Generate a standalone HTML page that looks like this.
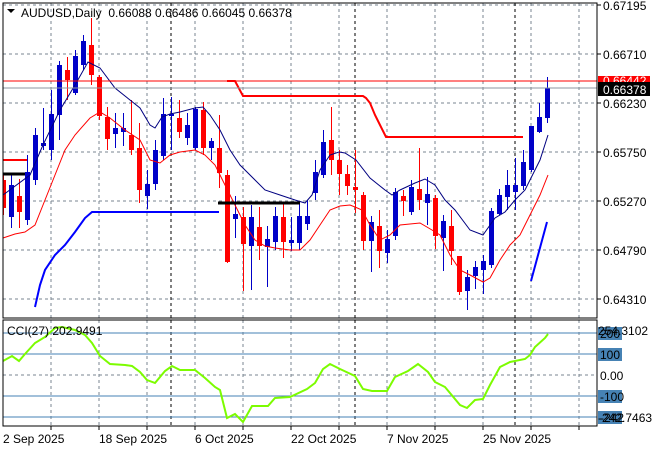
<!DOCTYPE html>
<html><head><meta charset="utf-8"><style>
html,body{margin:0;padding:0;background:#fff;width:660px;height:450px;overflow:hidden}
svg{display:block;font-family:"Liberation Sans",sans-serif;font-size:12px}
</style></head><body>
<svg id="s" width="660" height="450" xmlns="http://www.w3.org/2000/svg">
<rect width="660" height="450" fill="#fff"/>
<g id="grid" stroke="#7a8590" stroke-width="1" stroke-dasharray="3,3" fill="none"></g>
<g id="cand"></g>
<!-- moving averages -->
<polyline fill="none" stroke="#000080" stroke-width="1" points="3,195 30,175 43,145 60,110 75,85 88,62 100,68 115,88 125,96 140,108 150,125 155,128 162,117 170,114 180,112 195,108 203,107 210,115 220,130 230,150 240,165 255,180 265,190 280,195 295,200 305,203 312,195 320,170 330,155 339,152 345,153 356,160 370,178 385,190 392,195 400,190 415,183 425,179 435,185 445,200 455,210 470,230 483,235 495,218 505,212 515,200 525,190 540,160 548,135"/>
<polyline fill="none" stroke="#ff0000" stroke-width="1" points="3,238 15,234 25,232 35,225 45,200 55,175 65,150 75,135 90,118 100,112 110,118 125,130 140,140 150,160 160,163 170,155 180,152 195,150 205,155 215,165 225,185 235,205 245,225 255,240 265,246 275,248 290,250 300,250 310,240 320,225 330,210 340,206 350,205 355,207 362,210 370,225 380,240 390,235 400,225 410,224 420,223 432,230 440,235 450,255 460,270 470,275 483,282 490,278 500,260 510,245 520,235 530,215 540,195 548,175"/>
<polyline fill="none" stroke="#0000ff" stroke-width="2" points="35,307 40,285 45,270 55,255 65,245 75,232 85,218 92,212 219,212"/>
<polyline fill="none" stroke="#0000ff" stroke-width="2" points="531,281 547,222"/>
<polyline fill="none" stroke="#000" stroke-width="3" points="3,174 25,174"/>
<polyline fill="none" stroke="#000" stroke-width="3" points="218,203 300,203"/>
<polyline fill="none" stroke="#ff0000" stroke-width="2" points="3,160 27,160"/>
<polyline fill="none" stroke="#ff0000" stroke-width="2" points="227,81 235,81 243,96 363,96 366,98 370,103 375,115 380,125 386,137 523,137"/>
<line x1="3" y1="81" x2="597" y2="81" stroke="#ff0000" stroke-width="1"/>
<line x1="3" y1="88" x2="597" y2="88" stroke="#8c96a0" stroke-width="1"/>
<!-- indicator levels -->
<g stroke="#4682b4" stroke-width="1">
<line x1="3" y1="333" x2="597" y2="333"/><line x1="3" y1="354" x2="597" y2="354"/>
<line x1="3" y1="396" x2="597" y2="396"/><line x1="3" y1="417" x2="597" y2="417"/>
</g>
<line x1="3" y1="375" x2="597" y2="375" stroke="#7a8590" stroke-dasharray="3,3"/>
<polyline fill="none" stroke="#7cfc00" stroke-width="2" points="3,361 12,356 19,361 25,354 35,343 45,337 55,328 62,327 75,330 85,335 92,343 100,356 110,364 125,365 132,366 140,372 147,380 155,383 165,371 172,366 180,370 195,370 205,378 215,387 220,390 227,418 235,414 243,422 252,406 268,406 275,398 290,397 307,389 315,383 323,369 330,364 340,369 355,376 363,389 372,391 387,391 395,377 408,371 418,364 428,372 435,382 445,387 460,405 467,408 475,400 483,399 490,385 500,367 510,362 525,359 530,355 535,347 545,338 548,334"/>
<!-- frames -->
<rect x="3" y="3" width="594" height="315" fill="none" stroke="#000"/>
<rect x="3" y="320" width="594" height="106" fill="none" stroke="#000"/>
<g id="ticks" stroke="#000"></g>
<!-- header -->
<path d="M7,9 L15,9 L11,13 Z" fill="#000"/>
<text x="21" y="17" fill="#000">AUDUSD,Daily&#160; 0.66088 0.66486 0.66045 0.66378</text>
<text x="7" y="335" fill="#000">CCI(27) 202.9491</text>
<!-- price axis -->
<g fill="#000">
<text x="603" y="10">0.67195</text>
<text x="603" y="59">0.66710</text>
<text x="603" y="108">0.66230</text>
<text x="603" y="157">0.65750</text>
<text x="603" y="206">0.65270</text>
<text x="603" y="255">0.64790</text>
<text x="603" y="304">0.64310</text>
</g>
<rect x="598" y="76" width="52" height="6" fill="#ff0000"/>
<text x="603" y="85" fill="#fff">0.66442</text>
<rect x="598" y="82" width="52" height="14" fill="#000"/>
<text x="603" y="94" fill="#fff">0.66378</text>
<!-- CCI axis -->
<g fill="#4682b4">
<rect x="598" y="327" width="24" height="13"/>
<rect x="598" y="348" width="24" height="13"/>
<rect x="598" y="390" width="24" height="13"/>
<rect x="598" y="411" width="24" height="13"/>
</g>
<g fill="#000">
<text x="600" y="338">200</text>
<text x="598" y="335">254.3102</text>
<text x="600" y="359">100</text>
<text x="600" y="380">0.00</text>
<text x="600" y="401">-100</text>
<text x="600" y="422">-242</text>
<text x="598" y="422">-242.7463</text>
</g>
<!-- dates -->
<g fill="#000">
<text x="3" y="443">2 Sep 2025</text>
<text x="99" y="443">18 Sep 2025</text>
<text x="195" y="443">6 Oct 2025</text>
<text x="291" y="443">22 Oct 2025</text>
<text x="387" y="443">7 Nov 2025</text>
<text x="483" y="443">25 Nov 2025</text>
</g>
</svg>
<script>
var NS="http://www.w3.org/2000/svg";
function el(p,t,a){var e=document.createElementNS(NS,t);for(var k in a)e.setAttribute(k,a[k]);p.appendChild(e);return e;}
var g=document.getElementById('grid');
[5,54,103,152,201,250,299].forEach(function(y){el(g,'line',{x1:3,y1:y,x2:597,y2:y});});
[51,99,147,195,243,291,339,387,435,483,531,579].forEach(function(x){el(g,'line',{x1:x,y1:3,x2:x,y2:318});el(g,'line',{x1:x,y1:320,x2:x,y2:426});});
[171,355,515].forEach(function(x){el(g,'line',{x1:x,y1:3,x2:x,y2:318,stroke:'#000'});el(g,'line',{x1:x,y1:320,x2:x,y2:426,stroke:'#000'});});
var t=document.getElementById('ticks');
[5,54,103,152,201,250,299].forEach(function(y){el(t,'line',{x1:597,y1:y,x2:601,y2:y});});
[51,99,147,195,243,291,339,387,435,483,531,579].forEach(function(x){el(t,'line',{x1:x,y1:426,x2:x,y2:430});});
var C=[
[3,175,180,208,215,'r'],[11,175,185,217,228,'b'],[19,179,196,212,228,'r'],[27,155,172,220,225,'b'],
[35,128,135,180,185,'b'],[43,108,143,146,150,'b'],[51,90,114,150,160,'b'],[59,61,65,115,140,'b'],
[67,57,70,80,100,'r'],[75,50,56,93,95,'b'],[83,35,41,65,70,'b'],[91,18,45,75,85,'r'],
[99,75,77,116,120,'r'],[107,107,117,139,150,'r'],[115,113,128,134,148,'b'],[123,113,128,132,146,'b'],
[131,100,135,150,155,'r'],[139,123,148,190,203,'r'],[147,170,184,196,209,'b'],[155,140,150,184,190,'b'],
[163,98,114,156,160,'b'],[171,97,114,116,150,'b'],[179,100,118,132,138,'r'],[187,113,125,138,145,'b'],
[195,107,109,148,150,'b'],[203,102,110,148,155,'r'],[211,138,141,148,160,'b'],[219,115,148,173,188,'r'],
[227,170,175,262,263,'r'],[235,196,214,219,238,'b'],[243,207,217,244,291,'r'],[251,205,217,246,290,'b'],
[259,207,227,246,260,'r'],[267,226,239,247,287,'b'],[275,207,216,242,250,'b'],[283,204,217,242,258,'r'],
[291,217,240,243,251,'b'],[299,203,216,243,250,'b'],[307,200,216,224,230,'b'],[315,160,172,193,200,'b'],
[323,130,142,175,178,'b'],[331,107,140,160,175,'r'],[339,150,160,174,195,'r'],[347,165,174,186,195,'r'],
[355,150,187,190,213,'r'],[363,192,195,241,250,'r'],[371,216,222,241,272,'b'],[379,210,226,251,268,'r'],
[387,230,239,253,263,'b'],[395,188,192,236,240,'b'],[403,190,196,201,216,'r'],[411,180,187,212,215,'b'],
[419,148,189,200,210,'r'],[427,177,194,203,225,'b'],[435,195,198,236,249,'r'],[443,215,221,238,271,'b'],
[451,210,226,251,265,'r'],[459,256,256,292,295,'r'],[467,270,277,291,310,'b'],[475,261,267,276,289,'b'],
[483,255,261,270,294,'b'],[491,208,211,265,268,'b'],[499,189,195,214,215,'b'],[507,170,185,197,210,'b'],
[515,158,185,192,210,'b'],[523,150,162,186,190,'b'],[531,126,126,170,172,'b'],[539,103,117,132,133,'b'],
[547,77,88,118,123,'b']];
var cg=document.getElementById('cand');
C.forEach(function(c){var col=c[5]=='r'?'#ff0000':'#0000c8';
el(cg,'rect',{x:c[0],y:c[1],width:1,height:c[4]-c[1],fill:col});
var x0=Math.max(c[0]-2,4);el(cg,'rect',{x:x0,y:c[2],width:c[0]+3-x0,height:Math.max(c[3]-c[2],2),fill:col});});
</script>
</body></html>
